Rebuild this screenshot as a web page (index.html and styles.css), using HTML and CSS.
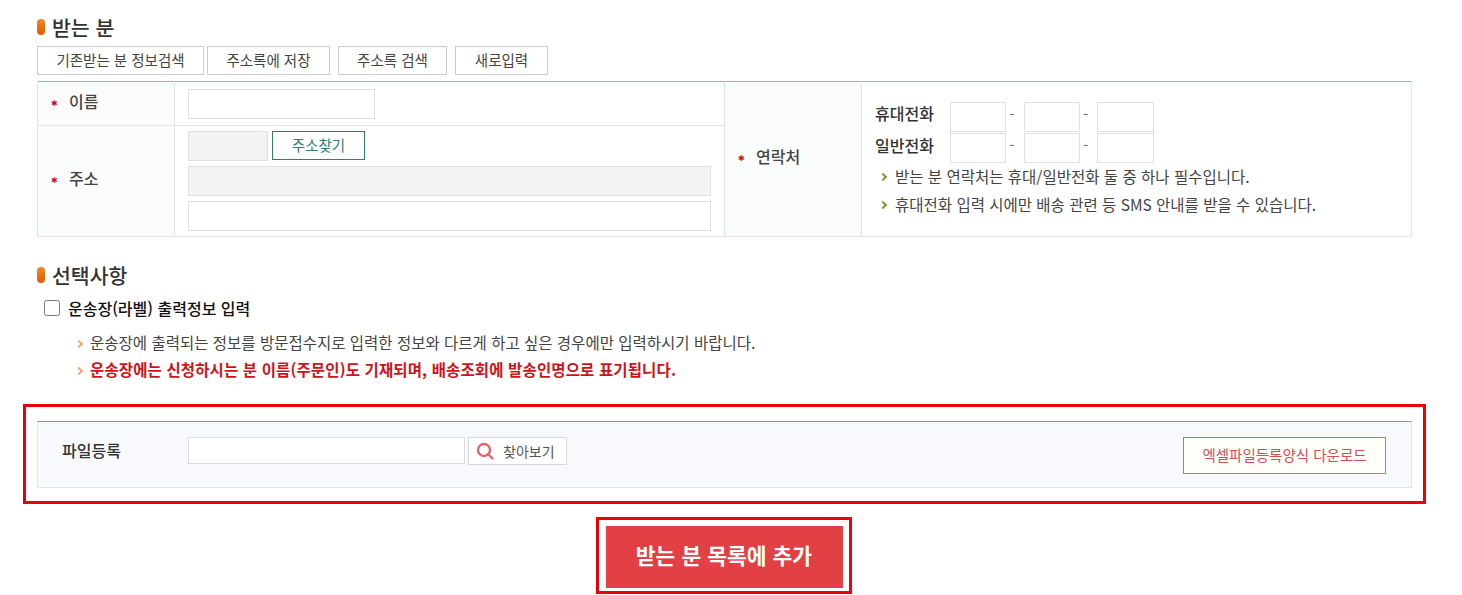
FILE: index.html
```html
<!DOCTYPE html>
<html lang="ko">
<head>
    <meta charset="UTF-8">
    <title>받는 분 입력</title>
    <link rel="stylesheet" href="styles.css">
</head>
<body>

<div class="container">
    <h2 class="sec-title">받는 분</h2>
    <div class="btn-row">
        <button class="btn-line w-search">기존받는 분 정보검색</button>
        <button class="btn-line w-save">주소록에 저장</button>
        <button class="btn-line w-book">주소록 검색</button>
        <button class="btn-line w-new">새로입력</button>
    </div>

    <table class="form-table">
        <colgroup>
            <col class="col-th"><col class="col-td-a"><col class="col-th"><col>
        </colgroup>
        <tr class="row-name">
            <th><span class="req">이름</span></th>
            <td><input type="text" class="inp inp-name"></td>
            <th rowspan="2"><span class="req">연락처</span></th>
            <td rowspan="2" class="contact">
                <div class="tel-row">
                    <strong>휴대전화</strong>
                    <input type="text" class="inp inp-tel"><span class="dash">-</span><input type="text" class="inp inp-tel"><span class="dash">-</span><input type="text" class="inp inp-tel">
                </div>
                <div class="tel-row">
                    <strong>일반전화</strong>
                    <input type="text" class="inp inp-tel"><span class="dash">-</span><input type="text" class="inp inp-tel"><span class="dash">-</span><input type="text" class="inp inp-tel">
                </div>
                <ul class="notes notes-green">
                    <li>받는 분 연락처는 휴대/일반전화 둘 중 하나 필수입니다.</li>
                    <li>휴대전화 입력 시에만 배송 관련 등 SMS 안내를 받을 수 있습니다.</li>
                </ul>
            </td>
        </tr>
        <tr>
            <th><span class="req">주소</span></th>
            <td class="addr">
                <div class="addr-top">
                    <input type="text" class="inp inp-zip" readonly>
                    <button class="btn-green">주소찾기</button>
                </div>
                <input type="text" class="inp inp-addr inp-gray" readonly>
                <input type="text" class="inp inp-addr">
            </td>
        </tr>
    </table>

    <h2 class="sec-title sec-option">선택사항</h2>
    <label class="check-label"><input type="checkbox"> 운송장(라벨) 출력정보 입력</label>
    <ul class="notes notes-orange">
        <li>운송장에 출력되는 정보를 방문접수지로 입력한 정보와 다르게 하고 싶은 경우에만 입력하시기 바랍니다.</li>
        <li class="warn">운송장에는 신청하시는 분 이름(주문인)도 기재되며, 배송조회에 발송인명으로 표기됩니다.</li>
    </ul>
</div>

<div class="red-box">
    <div class="file-panel">
        <strong class="file-label">파일등록</strong>
        <input type="text" class="inp inp-file">
        <button class="btn-find">
            <svg width="18" height="18" viewBox="0 0 18 18" fill="none" stroke="#e2656b" stroke-width="2.4">
                <circle cx="8" cy="8" r="6"/>
                <path d="M12 12l4.5 4.5" stroke-linecap="round"/>
            </svg>
            찾아보기
        </button>
        <button class="btn-excel">엑셀파일등록양식 다운로드</button>
    </div>
</div>

<div class="add-wrap">
    <div class="add-box">
        <button class="btn-add">받는 분 목록에 추가</button>
    </div>
</div>

</body>
</html>
```

FILE: styles.css
```css
* {
    box-sizing: border-box;
}
body {
    margin: 0;
    background-color: #fff;
    color: #333;
    font-family: "Noto Sans CJK KR", "Noto Sans", sans-serif;
    font-size: 15.5px;
    overflow: hidden;
}
button {
    font-family: inherit;
    cursor: pointer;
}
.container {
    padding: 0 50px 0 37px;
}
.sec-title {
    display: flex;
    align-items: center;
    gap: 7px;
    height: 46px;
    margin: 0;
    padding-top: 8px;
    font-size: 20.5px;
    font-weight: 500;
    color: #333;
}
.sec-title::before {
    content: "";
    width: 8px;
    height: 16px;
    border-radius: 4px;
    background: linear-gradient(#f08a24, #e25a00);
}
.sec-option {
    height: 30px;
    margin-top: 23px;
    padding-top: 0;
}
.btn-row {
    display: flex;
    gap: 8px;
    margin-bottom: 6px;
}
.btn-line {
    height: 29px;
    padding: 0 0 2px;
    border: 1px solid #ccc;
    background: #fff;
    color: #444;
    font-size: 14.5px;
}
.w-search { width: 167px; margin-right: -5px; }
.w-save { width: 123px; }
.w-book { width: 109px; }
.w-new { width: 93px; }

.form-table {
    width: 1375px;
    table-layout: fixed;
    border-collapse: collapse;
    border-top: 1px solid #8fb8ae;
    border-left: 1px solid #e3e3e3;
    border-right: 1px solid #e3e3e3;
    border-bottom: 1px solid #e3e3e3;
}
.col-th { width: 137px; }
.col-td-a { width: 550px; }
.form-table th {
    padding: 0 0 6px 13px;
    background-color: #fafbfb;
    border: 1px solid #e3e3e3;
    border-top: 0;
    text-align: left;
    font-size: 16px;
    font-weight: 500;
    color: #444;
}
.form-table .row-name > th:first-child {
    padding-bottom: 5px;
}
.form-table td {
    padding: 0 13px;
    border: 1px solid #e3e3e3;
    border-top: 0;
}
.row-name {
    height: 44px;
}
.req::before {
    content: "\2731";
    display: inline-block;
    width: 18px;
    font-family: "DejaVu Sans", sans-serif;
    font-size: 8px;
    vertical-align: 2px;
    color: #d0121b;
}
.inp {
    height: 30px;
    padding: 0 6px;
    border: 1px solid #e0e0e0;
    background: #fff;
}
.inp-name { display: block; width: 187px; }
.inp-zip { width: 80px; background: #f3f3f3; }
.inp-gray { background: #f3f3f3; }
.inp-addr { display: block; width: 523px; margin-top: 5px; }
.addr { padding-top: 5px !important; padding-bottom: 5px !important; }
.addr-top {
    display: flex;
    gap: 4px;
    align-items: flex-start;
}
.btn-green {
    width: 93px;
    height: 29px;
    padding: 0 0 2px;
    border: 1px solid #2f7d72;
    background: #fff;
    color: #2f7d72;
    font-size: 14.5px;
}
.contact {
    vertical-align: top;
    padding-top: 20px !important;
}
.tel-row {
    display: flex;
    align-items: flex-start;
    height: 31px;
}
.tel-row strong {
    width: 75px;
    font-size: 16px;
    font-weight: 500;
    line-height: 23px;
    color: #333;
}
.tel-row + .tel-row strong {
    line-height: 25px;
}
.inp-tel { width: 56px; }
.inp-tel:last-child { width: 57px; }
.dash {
    width: 18px;
    padding-left: 3px;
    line-height: 22px;
    color: #777;
}
.tel-row .dash + .inp-tel + .dash { width: 17px; }
.notes {
    margin: 0;
    padding: 0;
    list-style: none;
}
.notes li {
    position: relative;
    height: 28px;
    line-height: 28px;
    white-space: nowrap;
}
.notes li::before {
    content: "";
    position: absolute;
    top: 12px;
    width: 4px;
    height: 4px;
    border-top: 2px solid;
    border-right: 2px solid;
    transform: rotate(45deg);
}
.notes-green {
    margin-top: -2px;
    padding-left: 20px;
    color: #444;
}
.notes-green li::before {
    left: -15px;
    color: #7fa036;
}
.notes-orange {
    margin-top: 9px;
    padding-left: 53px;
    color: #444;
}
.notes-orange li {
    height: 27px;
    line-height: 27px;
}
.notes-orange li::before {
    left: -14px;
    color: #e3b27e;
}
.notes-orange .warn {
    color: #d0121b;
    font-weight: 700;
    letter-spacing: 0.13px;
}
.check-label {
    display: flex;
    align-items: center;
    gap: 8px;
    height: 24px;
    margin-top: 6px;
    padding-left: 7px;
    font-size: 16px;
    font-weight: 500;
    color: #111;
}
.check-label input {
    width: 16px;
    height: 16px;
    margin: 0;
}

.red-box {
    width: 1403px;
    height: 100px;
    margin: 21px 0 0 23px;
    padding: 14px 11px 12px 11px;
    border: 3px solid #ec0008;
}
.file-panel {
    display: flex;
    align-items: flex-start;
    height: 67px;
    padding: 15px 25px 0 24px;
    background-color: #f7f9fd;
    border: 1px solid #e3e3e8;
    border-top-color: #8f8f8f;
}
.file-label {
    width: 126px;
    font-size: 16px;
    font-weight: 500;
    line-height: 26px;
}
.inp-file { width: 277px; height: 27px; border-color: #ddd; }
.btn-find {
    display: flex;
    align-items: center;
    gap: 9px;
    width: 99px;
    height: 28px;
    margin-left: 3px;
    padding: 0 0 0 7px;
    border: 1px solid #d6d6d6;
    background: #fff;
    color: #555;
    font-size: 14px;
}
.btn-excel {
    width: 203px;
    height: 37px;
    margin-left: auto;
    padding: 0 0 2px;
    border: 1px solid #d66a6e;
    background: #fffdfa;
    color: #cf4f55;
    font-size: 14.5px;
}

.add-wrap {
    display: flex;
    justify-content: center;
    padding-top: 13px;
    margin-left: -15px;
}
.add-box {
    padding: 6px 6px 3px 7px;
    border: 3px solid #ec0008;
}
.btn-add {
    display: block;
    width: 237px;
    height: 62px;
    padding: 0 0 5px;
    border: 0;
    background-color: #e24044;
    color: #fff;
    font-size: 21.5px;
    font-weight: 700;
}
```
